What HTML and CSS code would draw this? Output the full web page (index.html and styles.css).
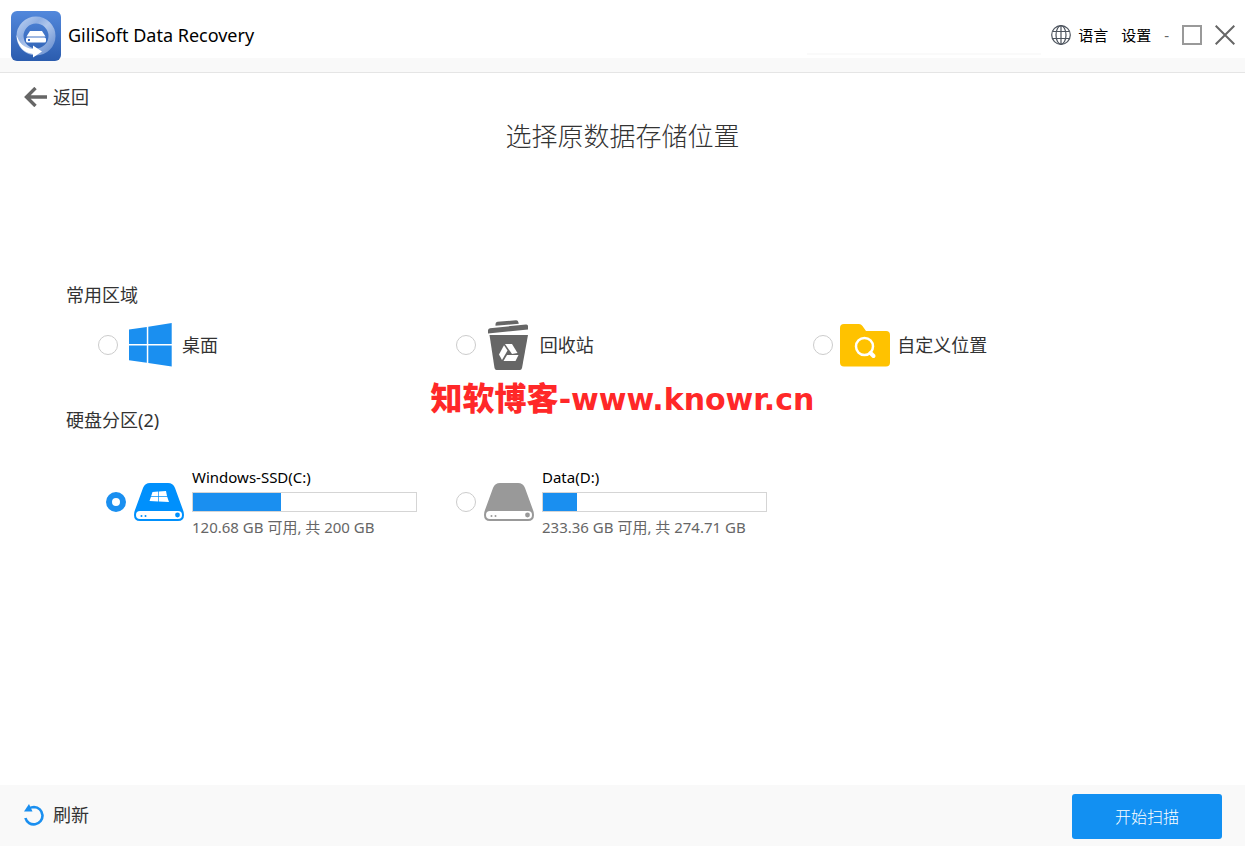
FILE: index.html
```html
<!DOCTYPE html>
<html lang="zh-CN">
<head>
<meta charset="utf-8">
<meta name="viewport" content="width=device-width, initial-scale=1">
<title>GiliSoft Data Recovery</title>
<link rel="stylesheet" href="styles.css">
</head>
<body>
<header class="titlebar">
  <svg class="logo" viewBox="0 0 50 50" aria-hidden="true">
    <defs>
      <linearGradient id="tile" x1="0" y1="0" x2="0" y2="1"><stop offset="0" stop-color="#5288dc"/><stop offset="1" stop-color="#2b5cae"/></linearGradient>
      <linearGradient id="ring" x1="0" y1="0" x2="1" y2="1"><stop offset="0" stop-color="#b4cbef"/><stop offset=".3" stop-color="#8fafe3"/><stop offset=".5" stop-color="#b0c7ec"/><stop offset="1" stop-color="#6a90d0"/></linearGradient>
    </defs>
    <rect width="50" height="50" rx="6" fill="url(#tile)"/>
    <circle cx="25" cy="25" r="16" fill="none" stroke="url(#ring)" stroke-width="7"/>
    <path d="M5.500 24C6 35 13 42 22 43V46.500L31 40.500L22 34.500V38C13 37 8 32 5.500 24Z" fill="#fff"/>
    <path d="M19 20H31L34.500 25.500H15.500Z" fill="#fff"/>
    <rect x="15" y="26.500" width="20" height="5" rx="1.500" fill="#fff"/>
    <rect x="17" y="28" width="2" height="2" fill="#3e70c2"/>
  </svg>
  <h1 class="app-name">GiliSoft Data Recovery</h1>
  <span class="header-rule"></span>
  <div class="tools">
    <button class="tool" type="button">
      <svg class="globe" viewBox="0 0 20 20" fill="none" stroke="#4d545e" stroke-width="1.200" aria-hidden="true"><circle cx="10" cy="10" r="9.300"/><ellipse cx="10" cy="10" rx="5" ry="9.300"/><path d="M2 6.500H18M2 13.500H18M10 .7V19.300"/></svg>
      语言
    </button>
    <button class="tool" type="button">设置</button>
    <button class="tool dash" type="button" aria-label="最小化">-</button>
    <button class="tool" type="button" aria-label="最大化"><svg class="win" viewBox="0 0 20 20" aria-hidden="true"><rect x="1" y="1" width="18" height="18" fill="none" stroke="#999" stroke-width="2"/></svg></button>
    <button class="tool" type="button" aria-label="关闭"><svg class="win" viewBox="0 0 20 20" aria-hidden="true"><path d="M.7 .7L19.300 19.300M19.300 .7L.7 19.300" stroke="#666" stroke-width="2"/></svg></button>
  </div>
</header>

<main class="content">
  <button class="link-button" type="button">
    <svg class="back-icon" viewBox="0 0 24 20" fill="none" stroke="#666" stroke-width="3.400" aria-hidden="true"><path d="M11.500 1L2.500 10L11.500 19M2.500 10H23"/></svg>
    返回
  </button>
  <h2 class="page-title">选择原数据存储位置</h2>

  <section class="areas">
    <h3 class="section-title">常用区域</h3>
    <div class="area-list">
      <label class="choice">
        <input class="radio" type="radio" name="location">
        <svg class="area-icon" viewBox="0 0 50 50" fill="#1a8ff0" aria-hidden="true"><path d="M4 9.500L21.800 7V24H4ZM23.300 6.800L46.700 3V24H23.300ZM4 25.500H21.800V42.800L4 40.300ZM23.300 25.500H46.700V46.500L23.300 43Z"/></svg>
        桌面
      </label>
      <label class="choice">
        <input class="radio" type="radio" name="location">
        <svg class="area-icon" viewBox="0 0 50 50" aria-hidden="true">
          <path d="M12.500 5.800V4Q12.500 2 14.500 1.800L33 .3Q35 .2 35.300 2L35.800 3.800ZM5 13.500V10.500Q5 8.500 7 8.200L43 4.500Q45 4.300 45 6V9.500Z" fill="#666"/>
          <path d="M6.500 15H45L39 48Q38.500 50 37 50H13.500Q12 50 11.500 48Z" fill="#666"/>
          <g fill="#fff"><path d="M22 24H29L34.500 33L29 34Z"/><path d="M21 25.200L24.500 30.500L19 40L16 34.500Z"/><path d="M24 35H35.500L32.500 41H20.500Z"/></g>
        </svg>
        回收站
      </label>
      <label class="choice">
        <input class="radio" type="radio" name="location">
        <svg class="area-icon" viewBox="0 0 50 50" aria-hidden="true"><path d="M0 8Q0 4 4 4H19Q21 4 22.500 6L26 11H46Q50 11 50 15V42.500Q50 46.500 46 46.500H4Q0 46.500 0 42.500Z" fill="#ffc200"/><circle cx="24.500" cy="26.500" r="8.500" fill="none" stroke="#fff" stroke-width="2.500"/><path d="M30.500 33L33.500 36" stroke="#fff" stroke-width="4" stroke-linecap="round"/></svg>
        自定义位置
      </label>
    </div>
  </section>

  <section class="disks">
    <h3 class="section-title">硬盘分区(2)</h3>
    <div class="disk-list">
      <label class="disk">
        <input class="radio" type="radio" name="location" checked>
        <svg class="disk-icon" viewBox="0 0 50 38" aria-hidden="true"><path d="M9 5Q11 0 16 0H34Q39 0 41 5L49 27Q50 29 50 32Q50 38 44 38H6Q0 38 0 32Q0 29 1 27Z" fill="#0090fc"/><rect x="2" y="28" width="46" height="8" rx="4" fill="#fff"/><g fill="#0090fc"><circle cx="7.500" cy="33" r="1"/><circle cx="11.500" cy="33" r="1"/><circle cx="43.500" cy="32" r="2.400"/></g><path d="M18.500 9L24.300 8.500V13H17.200ZM25 8.400L32 8L33 13H25ZM17 13.800H24.300V18.500L15.500 18ZM25 13.800H33.200L35 19L25 18.500Z" fill="#fff"/></svg>
        <span class="disk-info">
          <span class="disk-name">Windows-SSD(C:)</span>
          <span class="bar"><span class="bar-fill" style="width:39.500%"></span></span>
          <span class="disk-space">120.68 GB 可用, 共 200 GB</span>
        </span>
      </label>
      <label class="disk">
        <input class="radio" type="radio" name="location">
        <svg class="disk-icon" viewBox="0 0 50 38" aria-hidden="true"><path d="M9 5Q11 0 16 0H34Q39 0 41 5L49 27Q50 29 50 32Q50 38 44 38H6Q0 38 0 32Q0 29 1 27Z" fill="#999"/><rect x="2" y="28" width="46" height="8" rx="4" fill="#fff"/><g fill="#999"><circle cx="7.500" cy="33" r="1"/><circle cx="11.500" cy="33" r="1"/><circle cx="43.500" cy="32" r="2.400"/></g></svg>
        <span class="disk-info">
          <span class="disk-name">Data(D:)</span>
          <span class="bar"><span class="bar-fill" style="width:15.300%"></span></span>
          <span class="disk-space">233.36 GB 可用, 共 274.71 GB</span>
        </span>
      </label>
    </div>
  </section>
  <div class="watermark">知软博客<span class="watermark-url">-www.knowr.cn</span></div>
</main>

<footer class="footer">
  <button class="link-button refresh" type="button">
    <svg class="refresh-icon" viewBox="0 0 22 22" aria-hidden="true"><path d="M6 4.500Q8.500 3 11 3A8.700 8.700 0 1 1 2.400 14" fill="none" stroke="#1a8ff0" stroke-width="2.600"/><path d="M1 7.500L6 0L9.500 7.500Z" fill="#1a8ff0"/></svg>
    刷新
  </button>
  <button class="scan" type="button">开始扫描</button>
</footer>
</body>
</html>
```

FILE: styles.css
```css
* {
  box-sizing: border-box;
}

body {
  display: flex;
  flex-direction: column;
  min-height: 100vh;
  margin: 0;
  background: #fff;
  color: #333;
  font: 18px/24px "Noto Sans", "Noto Sans CJK SC", sans-serif;
}

button {
  margin: 0;
  padding: 0;
  border: 0;
  background: none;
  color: inherit;
  font: inherit;
  cursor: pointer;
}

h1,
h2,
h3 {
  margin: 0;
  font-weight: 400;
}

.titlebar {
  display: flex;
  align-items: center;
  gap: 7px;
  height: 73px;
  padding: 0 10px 0 11px;
  border-bottom: 1px solid #e5e5e5;
  background: linear-gradient(#fff 58px, #f9f9f9 58px);
}

.logo {
  width: 50px;
  height: 50px;
}

.app-name {
  flex: 1;
  padding-bottom: 2px;
  color: #000;
  font-size: 18px;
  line-height: 24px;
}

.header-rule {
  align-self: flex-start;
  width: 234px;
  height: 2px;
  margin-top: 53px;
  background: #fafafa;
}

.tools {
  display: flex;
  align-items: center;
  gap: 13px;
  margin-left: 3px;
  padding-bottom: 2px;
}

.tool {
  display: flex;
  align-items: center;
  gap: 7px;
  color: #000;
  font-size: 15px;
  line-height: 20px;
}

.dash {
  color: #666;
}

.globe,
.win {
  width: 20px;
  height: 20px;
}

.content {
  position: relative;
  flex: 1;
  padding: 12px 24px;
}

.link-button {
  display: flex;
  align-items: center;
  gap: 5px;
}

.back-icon {
  width: 24px;
  height: 20px;
}

.page-title {
  margin-top: 9px;
  font-size: 26px;
  font-weight: 300;
  line-height: 36px;
  text-align: center;
}

.areas {
  margin-top: 129px;
}

.section-title {
  padding-left: 42px;
  font-size: 18px;
  line-height: 24px;
}

.area-list {
  display: grid;
  grid-template-columns: repeat(3, 1fr);
  margin: 13px 50px 0 74px;
}

.choice {
  display: flex;
  align-items: center;
  gap: 7px;
}

.radio {
  flex: none;
  appearance: none;
  width: 20px;
  height: 20px;
  margin: 0;
  border: 1px solid #ccc;
  border-radius: 50%;
  background: #fff;
}

.radio:checked {
  border: 6px solid #1a8ff0;
}

.area-icon {
  width: 50px;
  height: 50px;
}

.disks {
  margin-top: 38px;
}

.disk-list {
  display: flex;
  flex-wrap: wrap;
  gap: 39px;
  margin: 35px 0 0 82px;
}

.disk {
  display: flex;
  align-items: center;
  gap: 8px;
}

.disk-icon {
  width: 50px;
  height: 38px;
}

.disk-info {
  display: flex;
  flex-direction: column;
  gap: 5px;
  width: 225px;
  font-size: 15px;
  line-height: 20px;
}

.disk-name {
  color: #000;
}

.disk-space {
  color: #666;
  white-space: nowrap;
}

.bar {
  height: 20px;
  border: 1px solid #d5d5d5;
}

.bar-fill {
  display: block;
  height: 100%;
  background: #1a8ff0;
}

.watermark {
  position: absolute;
  top: 303px;
  right: 0;
  left: 0;
  color: #ff2828;
  font: 900 32px/40px "Noto Sans CJK SC", sans-serif;
  text-align: center;
  pointer-events: none;
}

.watermark-url {
  font: 700 30px/40px "DejaVu Sans", sans-serif;
}

.footer {
  display: flex;
  align-items: center;
  justify-content: space-between;
  height: 61px;
  padding: 2px 23px 0;
  background: #f9f9f9;
}

.refresh {
  padding-bottom: 3px;
}

.refresh-icon {
  width: 22px;
  height: 22px;
  margin-right: 3px;
}

.scan {
  width: 150px;
  height: 45px;
  border-radius: 3px;
  background: #1290f2;
  color: #fff;
  font-size: 16px;
  font-weight: 300;
}
```
